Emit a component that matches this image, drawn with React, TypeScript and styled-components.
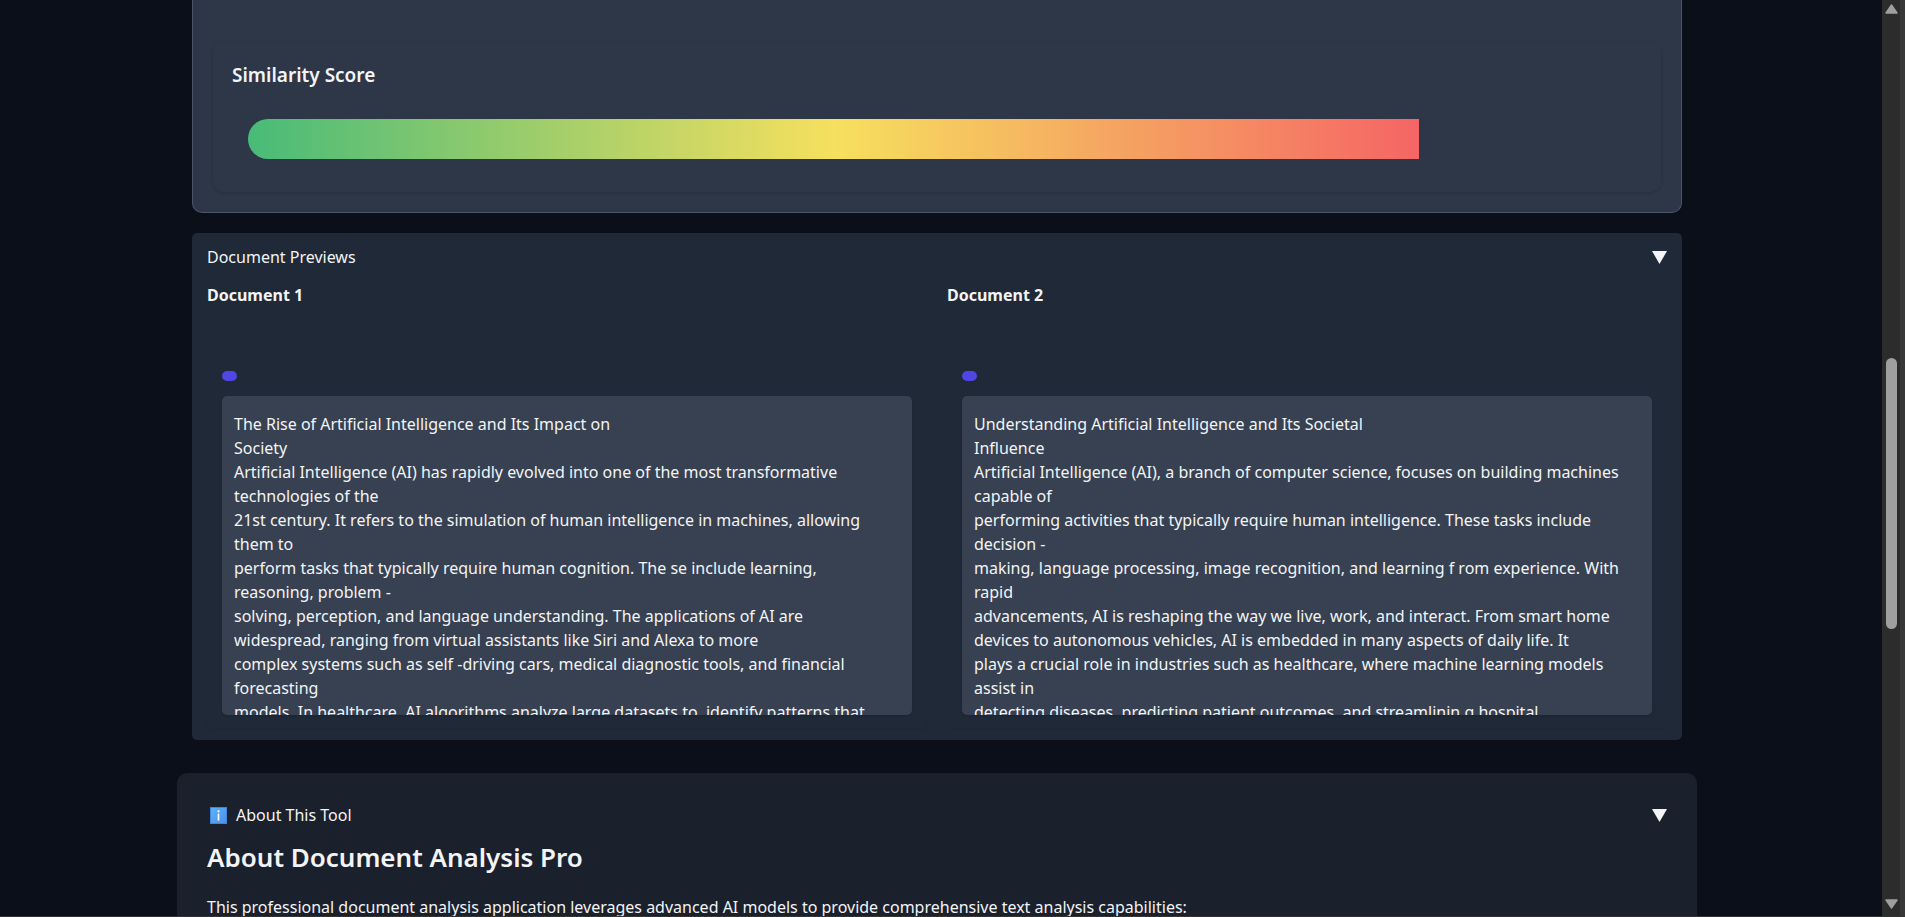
import React from "react";
import styled, { createGlobalStyle } from "styled-components";

const GlobalStyle = createGlobalStyle`
  * { box-sizing: border-box; }
  body {
    margin: 0;
    background: #0b0f19;
    color: #f3f4f6;
    font-family: "Noto Sans", "Open Sans", sans-serif;
    font-size: 16px;
    line-height: 24px;
  }
  h2, h3, h4, p { margin: 0; }
`;

const Shell = styled.div`
  display: flex;
  height: 100vh;
  border-bottom: 1px solid #333333;
  overflow: hidden;
`;

const Page = styled.main`
  flex: 1;
  min-width: 0;
  padding: 0 185px 0 177px;
  overflow: hidden;
`;

const Results = styled.div`
  display: flex;
  flex-direction: column;
  gap: 20px;
  padding: 0 15px;
  margin-bottom: 33px;
`;

const ScoreCard = styled.section`
  padding: 41px 20px 20px;
  background: #2d3748;
  border: 1px solid #4a5568;
  border-top: 0;
  border-radius: 0 0 10px 10px;
`;

const ScorePanel = styled.div`
  padding: 20px 19px 33px;
  border-radius: 10px;
  box-shadow: 0 1px 3px rgba(0, 0, 0, 0.16);
`;

const ScoreTitle = styled.h3`
  font-size: 19px;
  font-weight: 600;
  line-height: 28px;
  margin-bottom: 30px;
`;

const ScoreTrack = styled.div`
  height: 40px;
  margin: 0 16px;
  border-radius: 20px;
  overflow: hidden;
`;

const ScoreFill = styled.div`
  height: 100%;
  background: linear-gradient(90deg, #48bb78, #f6e05e, #f56565);
`;

const Previews = styled.section`
  padding: 12px 15px;
  background: #1f2937;
  border-radius: 5px;
`;

const Toggle = styled.button`
  display: flex;
  align-items: center;
  justify-content: space-between;
  width: 100%;
  padding: 0;
  border: 0;
  background: none;
  color: inherit;
  font: inherit;
  text-align: left;
`;

const ToggleLabel = styled.span`
  display: flex;
  align-items: center;
  gap: 9px;
  padding-left: 3px;
`;

const Columns = styled.div`
  display: grid;
  grid-template-columns: 1fr 1fr;
  gap: 20px;
  margin-top: 14px;
`;

const DocumentTitle = styled.h4`
  font-size: 16px;
  font-weight: 700;
  line-height: 24px;
  margin-bottom: 49px;
`;

const Field = styled.label`
  display: block;
  padding: 15px 15px 13px;
  border-radius: 5px;
  box-shadow: 0 1px 2px rgba(0, 0, 0, 0.05);
`;

const FieldTag = styled.span`
  display: block;
  width: 15px;
  height: 10px;
  margin-bottom: 15px;
  border-radius: 5px;
  background: #4f46e5;
`;

const FieldText = styled.textarea`
  display: block;
  width: 100%;
  height: 319px;
  padding: 16px 12px 0;
  border: 0;
  border-radius: 5px;
  background: #374151;
  color: inherit;
  font: inherit;
  white-space: pre;
  overflow: hidden;
  resize: none;
  box-shadow: 0 1px 2px rgba(0, 0, 0, 0.12);
`;

const About = styled.section`
  padding: 30px;
  background: #1a202c;
  border-radius: 10px;
`;

const AboutTitle = styled.h2`
  font-size: 26px;
  font-weight: 600;
  line-height: 36px;
  margin: 12px 0 20px;
`;

const ScrollRail = styled.div`
  display: flex;
  flex-direction: column;
  align-items: center;
  width: 23px;
  padding: 4px 0 7px;
  background: #2c2c2c;
  border-right: 5px solid #383838;
`;

const ScrollThumb = styled.div`
  width: 11px;
  height: 271px;
  margin: 344px 0 auto;
  border-radius: 6px;
  background: #9f9f9f;
`;

function Caret() {
  return (
    <svg width="15" height="13" viewBox="0 0 15 13" aria-hidden="true">
      <path d="M0 0H15L7.5 13Z" fill="#f3f4f6" />
    </svg>
  );
}

function InfoIcon() {
  return (
    <svg width="17" height="17" viewBox="0 0 17 17" aria-hidden="true">
      <defs>
        <linearGradient id="tile" x1="0" y1="0" x2="1" y2="1">
          <stop offset="0" stopColor="#58b4fb" />
          <stop offset="1" stopColor="#4f8fe9" />
        </linearGradient>
      </defs>
      <rect width="17" height="17" fill="#4382de" />
      <rect x="1" y="1" width="15" height="15" fill="url(#tile)" />
      <circle cx="8.5" cy="4.3" r="1.1" fill="#fff" />
      <rect x="7.7" y="6.6" width="1.6" height="7" fill="#fff" />
    </svg>
  );
}

function ScrollArrow({ down = false }: { down?: boolean }) {
  return (
    <svg width="13" height="10" viewBox="0 0 13 10" aria-hidden="true">
      <path
        d={down ? "M1 1H12L6.5 9Z" : "M1 9H12L6.5 1Z"}
        fill="#9f9f9f"
        stroke="#9f9f9f"
        strokeWidth="1.4"
        strokeLinejoin="round"
      />
    </svg>
  );
}

const documents = [
  {
    title: "Document 1",
    lines: [
      "The Rise of Artificial Intelligence and Its Impact on",
      "Society",
      "Artificial Intelligence (AI) has rapidly evolved into one of the most transformative",
      "technologies of the",
      "21st century. It refers to the simulation of human intelligence in machines, allowing",
      "them to",
      "perform tasks that typically require human cognition. The se include learning,",
      "reasoning, problem -",
      "solving, perception, and language understanding. The applications of AI are",
      "widespread, ranging from virtual assistants like Siri and Alexa to more",
      "complex systems such as self -driving cars, medical diagnostic tools, and financial",
      "forecasting",
      "models. In healthcare, AI algorithms analyze large datasets to  identify patterns that",
    ],
  },
  {
    title: "Document 2",
    lines: [
      "Understanding Artificial Intelligence and Its Societal",
      "Influence",
      "Artificial Intelligence (AI), a branch of computer science, focuses on building machines",
      "capable of",
      "performing activities that typically require human intelligence. These tasks include",
      "decision -",
      "making, language processing, image recognition, and learning f rom experience. With",
      "rapid",
      "advancements, AI is reshaping the way we live, work, and interact. From smart home",
      "devices to autonomous vehicles, AI is embedded in many aspects of daily life. It",
      "plays a crucial role in industries such as healthcare, where machine learning models",
      "assist in",
      "detecting diseases, predicting patient outcomes, and streamlinin g hospital",
    ],
  },
];

export default function App() {
  const score = 85;
  return (
    <>
      <GlobalStyle />
      <Shell>
        <Page>
          <Results>
            <ScoreCard>
              <ScorePanel>
                <ScoreTitle>Similarity Score</ScoreTitle>
                <ScoreTrack>
                  <ScoreFill style={{ width: `${score}%` }} />
                </ScoreTrack>
              </ScorePanel>
            </ScoreCard>
            <Previews>
              <Toggle type="button" aria-expanded="true">
                Document Previews
                <Caret />
              </Toggle>
              <Columns>
                {documents.map((doc) => (
                  <div key={doc.title}>
                    <DocumentTitle>{doc.title}</DocumentTitle>
                    <Field>
                      <FieldTag />
                      <FieldText readOnly aria-label={doc.title} value={doc.lines.join("\n")} />
                    </Field>
                  </div>
                ))}
              </Columns>
            </Previews>
          </Results>
          <About>
            <Toggle type="button" aria-expanded="true">
              <ToggleLabel>
                <InfoIcon />
                About This Tool
              </ToggleLabel>
              <Caret />
            </Toggle>
            <AboutTitle>About Document Analysis Pro</AboutTitle>
            <p>
              This professional document analysis application leverages advanced AI models to provide
              comprehensive text analysis capabilities:
            </p>
          </About>
        </Page>
        <ScrollRail aria-hidden="true">
          <ScrollArrow />
          <ScrollThumb />
          <ScrollArrow down />
        </ScrollRail>
      </Shell>
    </>
  );
}
